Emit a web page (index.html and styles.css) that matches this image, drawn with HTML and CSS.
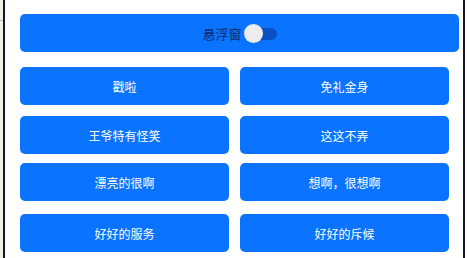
FILE: index.html
```html
<!DOCTYPE html>
<html lang="zh">
<head>
<meta charset="utf-8">
<link rel="stylesheet" href="styles.css">
</head>
<body>
<div class="frame">
  <div class="strip-left"><div class="tick"></div></div>
  <div class="edge"></div>
  <main class="panel">
    <div class="float-bar">
      <span class="float-label">悬浮窗</span>
      <span class="switch"><span class="knob"></span></span>
    </div>
    <div class="grid">
      <div class="row">
        <button class="btn">戳啦</button>
        <button class="btn">免礼金身</button>
      </div>
      <div class="row gap-11">
        <button class="btn">王爷特有怪笑</button>
        <button class="btn">这这不弄</button>
      </div>
      <div class="row gap-9">
        <button class="btn">漂亮的很啊</button>
        <button class="btn">想啊，很想啊</button>
      </div>
      <div class="row gap-13">
        <button class="btn">好好的服务</button>
        <button class="btn">好好的斥候</button>
      </div>
    </div>
  </main>
  <div class="edge"></div>
  <div class="strip-right"></div>
</div>
</body>
</html>
```

FILE: styles.css
```css
html, body {
  margin: 0;
  padding: 0;
  height: 100%;
  background: #ffffff;
}
body {
  font-family: "Noto Sans CJK SC", "Noto Sans", sans-serif;
}
.frame {
  display: flex;
  height: 258px;
  width: 467px;
  overflow: hidden;
}
.strip-left {
  width: 3px;
  background: #f4f0e8;
  position: relative;
}
.tick {
  position: absolute;
  left: 0;
  top: 20px;
  width: 3px;
  height: 1px;
  background: #c9b79c;
}
.edge {
  width: 2px;
  background: #14142c;
}
.strip-right {
  width: 2px;
  background: #ffffff;
}
.panel {
  flex: 1;
  background: #ffffff;
  padding: 14px 0 0 15px;
  box-sizing: border-box;
}
.float-bar {
  height: 38px;
  margin-right: 4px;
  background: #0a73ff;
  border-radius: 5px;
  display: flex;
  align-items: center;
  justify-content: center;
  gap: 2px;
}
.float-label {
  font-size: 13px;
  color: #0d2c6b;
  line-height: 1;
}
.switch {
  position: relative;
  width: 33px;
  height: 19px;
  display: inline-flex;
  align-items: center;
}
.switch::before {
  content: "";
  position: absolute;
  left: 0;
  right: 0;
  top: 4px;
  height: 12px;
  border-radius: 6px;
  background: #0b4fc4;
}
.knob {
  position: relative;
  width: 19px;
  height: 19px;
  border-radius: 50%;
  background: #ececec;
}
.grid {
  margin-top: 15px;
  display: flex;
  flex-direction: column;
}
.row {
  display: flex;
  gap: 11px;
}
.gap-11 { margin-top: 11px; }
.gap-9 { margin-top: 9px; }
.gap-13 { margin-top: 13px; }
.btn {
  width: 209px;
  height: 38px;
  border: none;
  border-radius: 5px;
  background: #0a73ff;
  color: #ffffff;
  font-family: "Noto Sans CJK SC", "Noto Sans", sans-serif;
  font-size: 12px;
  padding: 0;
  margin: 0;
}
```
